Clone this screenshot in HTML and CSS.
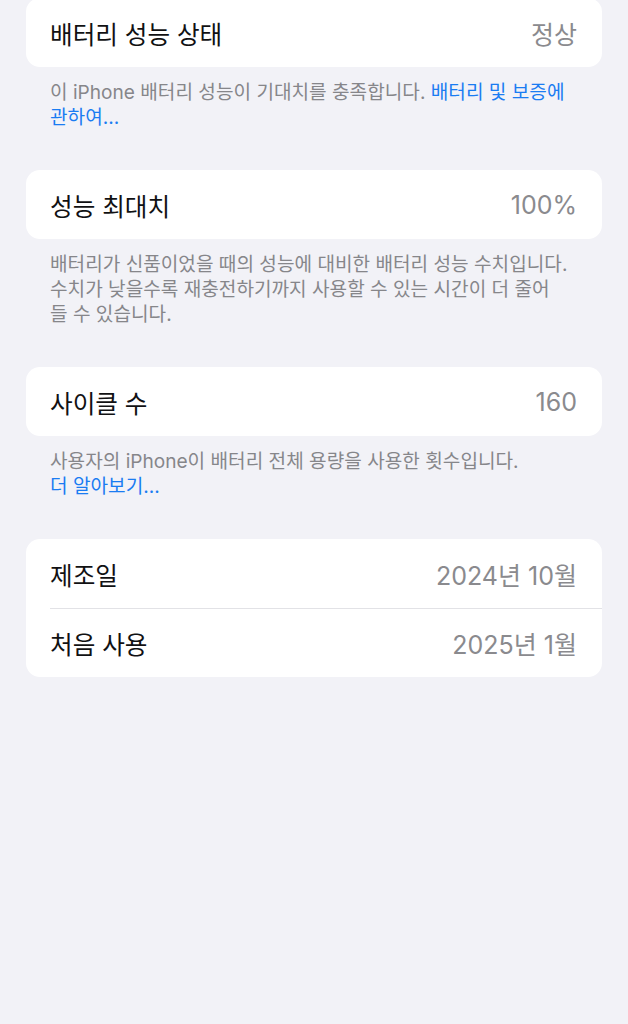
FILE: index.html
```html
<!DOCTYPE html>
<html lang="ko">
<head>
<meta charset="utf-8">
<link rel="stylesheet" href="styles.css">
</head>
<body>
<main class="page">
  <section class="group first">
    <div class="card">
      <div class="row"><span class="label">배터리 성능 상태</span><span class="value">정상</span></div>
    </div>
    <p class="footer">이 iPhone 배터리 성능이 기대치를 충족합니다. <span class="link">배터리 및 보증에<br>관하여...</span></p>
  </section>
  <section class="group">
    <div class="card">
      <div class="row"><span class="label">성능 최대치</span><span class="value">100%</span></div>
    </div>
    <p class="footer">배터리가 신품이었을 때의 성능에 대비한 배터리 성능 수치입니다.<br>수치가 낮을수록 재충전하기까지 사용할 수 있는 시간이 더 줄어<br>들 수 있습니다.</p>
  </section>
  <section class="group">
    <div class="card">
      <div class="row"><span class="label">사이클 수</span><span class="value">160</span></div>
    </div>
    <p class="footer">사용자의 iPhone이 배터리 전체 용량을 사용한 횟수입니다.<br><span class="link">더 알아보기...</span></p>
  </section>
  <section class="group">
    <div class="card">
      <div class="row"><span class="label">제조일</span><span class="value">2024년 10월</span></div>
      <div class="row"><span class="label">처음 사용</span><span class="value">2025년 1월</span></div>
    </div>
  </section>
</main>
</body>
</html>
```
FILE: styles.css
```css
html, body {
  margin: 0;
  padding: 0;
  background: #f2f2f7;
}
body {
  width: 628px;
  height: 1024px;
  overflow: hidden;
  font-family: Inter, "Noto Sans CJK KR", sans-serif;
  -webkit-font-smoothing: antialiased;
}
.page {
  display: flex;
  flex-direction: column;
  padding: 0 26px;
}
.group {
  margin-bottom: 40px;
}
.group.first {
  margin-top: -2px;
}
.card {
  background: #ffffff;
  border-radius: 14px;
  overflow: hidden;
}
.row {
  height: 69px;
  display: flex;
  align-items: center;
  justify-content: space-between;
  padding: 0 25px 0 24px;
  box-sizing: border-box;
}
.row + .row {
  border-top: 1px solid #e2e2e6;
  margin-left: 24px;
  padding-left: 0;
}
.label {
  font-size: 24.6px;
  color: #111113;
}
.value {
  font-size: 25px;
  color: #8a8a8e;
}
.footer {
  margin: 0;
  padding: 13px 8px 0 24px;
  font-size: 19.1px;
  line-height: 25px;
  color: #86868a;
  white-space: nowrap;
}
.link {
  color: #1a7cf2;
}
```
